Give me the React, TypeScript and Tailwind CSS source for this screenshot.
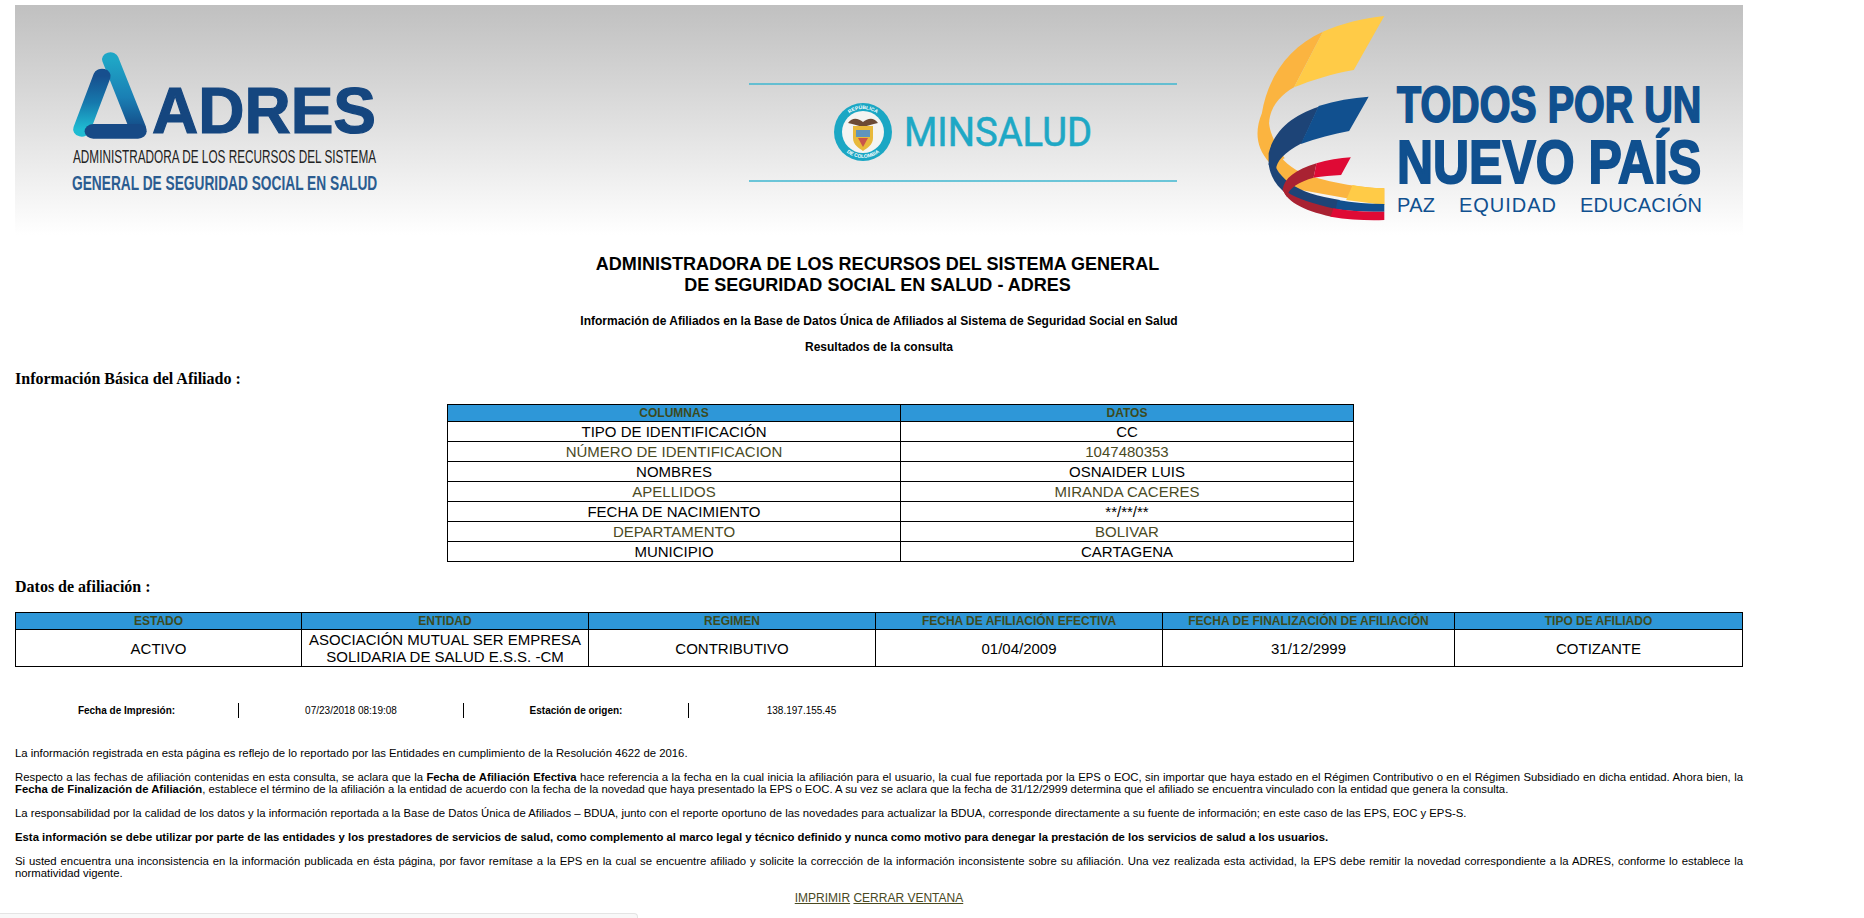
// App.tsx - consulta BDUA ADRES
const afiliado = [
  ["TIPO DE IDENTIFICACIÓN", "CC"],
  ["NÚMERO DE IDENTIFICACION", "1047480353"],
  ["NOMBRES", "OSNAIDER LUIS"],
  ["APELLIDOS", "MIRANDA CACERES"],
  ["FECHA DE NACIMIENTO", "**/**/**"],
  ["DEPARTAMENTO", "BOLIVAR"],
  ["MUNICIPIO", "CARTAGENA"],
];

const columnas = [
  { titulo: "ESTADO", valor: "ACTIVO", ancho: "w-[286px]" },
  { titulo: "ENTIDAD", valor: "ASOCIACIÓN MUTUAL SER EMPRESA SOLIDARIA DE SALUD E.S.S. -CM", ancho: "w-[287px]" },
  { titulo: "REGIMEN", valor: "CONTRIBUTIVO", ancho: "w-[287px]" },
  { titulo: "FECHA DE AFILIACIÓN EFECTIVA", valor: "01/04/2009", ancho: "w-[287px]" },
  { titulo: "FECHA DE FINALIZACIÓN DE AFILIACIÓN", valor: "31/12/2999", ancho: "w-[292px]" },
  { titulo: "TIPO DE AFILIADO", valor: "COTIZANTE", ancho: "w-[288px]" },
];

function LogoAdres() {
  return (
    <svg width="330" height="155" viewBox="0 0 330 155" className="mt-[40px] ml-[45px] shrink-0 overflow-visible">
      <defs>
        <linearGradient id="adresDer" x1="0" y1="0" x2="0" y2="1">
          <stop offset="0" stopColor="#1fa6c6" />
          <stop offset="0.55" stopColor="#1a7fb4" />
          <stop offset="1" stopColor="#144b87" />
        </linearGradient>
        <linearGradient id="adresIzq" x1="0" y1="0" x2="0" y2="1">
          <stop offset="0" stopColor="#174f8e" />
          <stop offset="0.5" stopColor="#1679ad" />
          <stop offset="1" stopColor="#1fbbd2" />
        </linearGradient>
      </defs>
      <g transform="translate(-60 -45) scale(0.3954 0.3333)">
        <path d="M279 178 L349 386" fill="none" stroke="url(#adresDer)" strokeWidth="42" strokeLinecap="round" />
        <path d="M258 228 L207 388" fill="none" stroke="url(#adresIzq)" strokeWidth="44" strokeLinecap="round" />
        <path d="M236 394 L349 394" fill="none" stroke="#174a86" strokeWidth="44" strokeLinecap="round" />
      </g>
      <g className="font-['Liberation_Sans',sans-serif]">
        <text x="92" y="88" fontSize="64" fontWeight="700" fill="#15467f" stroke="#15467f" strokeWidth="1.2" textLength="224" lengthAdjust="spacingAndGlyphs">ADRES</text>
        <text transform="translate(13 118) scale(0.72 1)" fontSize="18" fill="#222222" textLength="421" lengthAdjust="spacingAndGlyphs">ADMINISTRADORA DE LOS RECURSOS DEL SISTEMA</text>
        <text transform="translate(12 145) scale(0.72 1)" fontSize="21" fontWeight="700" fill="#2b5c90" textLength="424" lengthAdjust="spacingAndGlyphs">GENERAL DE SEGURIDAD SOCIAL EN SALUD</text>
      </g>
    </svg>
  );
}

function LogoMinsalud() {
  return (
    <svg width="428" height="100" viewBox="0 0 428 100" className="mt-[78px] ml-[359px] shrink-0">
      <path d="M0 1 H428 M0 98 H428" stroke="#3fb6d0" strokeWidth="1.6" />
      <g transform="translate(114 49)">
        <circle r="29" fill="#1ba7c4" />
        <circle r="21" fill="#f4f4f2" />
        <path d="M-15 -9 C-10 -16 -4 -13 0 -10 C4 -13 10 -16 15 -9 C9 -8 5 -6 0 -5 C-5 -6 -9 -8 -15 -9Z" fill="#6b4a35" />
        <path d="M-10 -6 H10 V6 C10 13 4 16 0 19 C-4 16 -10 13 -10 6Z" fill="#e8b93a" />
        <path d="M-7 -2 H7 V5 H-7Z" fill="#5f94bd" />
        <path d="M-5 6 H5 L0 15Z" fill="#c9544a" />
        <path id="aroSup" d="M-23 0 A23 23 0 0 1 23 0" fill="none" />
        <path id="aroInf" d="M-26 0 A26 26 0 0 0 26 0" fill="none" />
        <text fontSize="5" fontWeight="700" fill="#ffffff" textAnchor="middle" className="font-['Liberation_Sans',sans-serif]">
          <textPath href="#aroSup" startOffset="50%">REPÚBLICA</textPath>
        </text>
        <text fontSize="5" fontWeight="700" fill="#ffffff" textAnchor="middle" className="font-['Liberation_Sans',sans-serif]">
          <textPath href="#aroInf" startOffset="50%">DE COLOMBIA</textPath>
        </text>
      </g>
      <text x="155" y="63" fontSize="41" fontWeight="400" fill="#1ea8c5" textLength="188" lengthAdjust="spacingAndGlyphs" stroke="#1ea8c5" strokeWidth="0.6" className="font-['Roboto',sans-serif]">MINSALUD</text>
    </svg>
  );
}

function LogoPais() {
  return (
    <svg width="460" height="215" viewBox="0 0 460 215" className="mt-[5px] ml-[73px] shrink-0 overflow-visible">
      <g transform="translate(-50 -10) scale(0.4237 0.3333)">
        {/* cinta amarilla */}
        <path d="M290 95 C210 140 160 230 146 340 C130 390 130 440 165 490 L200 475 C180 440 165 400 163 370 C165 320 190 285 222 262Z" fill="#fbb440" />
        <path d="M435 48 L363 210 C310 222 265 240 222 262 L290 95 C335 70 385 55 435 48Z" fill="#ffcb47" />
        <path d="M185 460 C200 490 225 515 265 530 C320 550 375 562 435 565 L435 615 L215 565 L175 500Z" fill="#fbb440" />
        <path d="M360 555 C385 562 410 564 435 565 L435 615 L345 600Z" fill="#ffcb47" />
        {/* cinta azul */}
        <path d="M162 490 C165 540 195 590 250 610 C275 620 300 625 325 630 L330 600 C305 595 280 588 260 580 C225 565 195 540 180 505Z" fill="#1d4477" />
        <path d="M325 600 C360 608 400 612 435 612 L435 635 C395 637 355 634 320 628Z" fill="#11508f" />
        <path d="M280 320 C220 345 175 390 162 460 L162 495 L180 510 C178 490 195 460 240 430Z" fill="#1d4477" />
        <path d="M398 290 L352 393 C315 402 275 415 238 432 L280 318 C320 302 360 293 398 290Z" fill="#11508f" />
        {/* cinta roja */}
        <path d="M195 565 C200 600 240 632 310 650 L318 626 C270 612 225 595 205 575Z" fill="#a92232" />
        <path d="M315 625 C350 633 390 637 435 635 L435 660 C400 662 355 660 308 650Z" fill="#df0a35" />
        <path d="M275 490 C225 510 198 535 195 570 L205 590 C208 565 235 545 268 533Z" fill="#a92232" />
        <path d="M356 472 L333 525 C310 527 290 529 268 533 L275 490 C300 480 330 474 356 472Z" fill="#df0a35" />
      </g>
      <g fill="#10508f" className="font-['Liberation_Sans',sans-serif]">
        <text transform="translate(147 112) scale(0.82 1)" fontSize="50" fontWeight="700" stroke="#10508f" strokeWidth="1.8" textLength="371" lengthAdjust="spacingAndGlyphs">TODOS POR UN</text>
        <text transform="translate(147 173) scale(0.82 1)" fontSize="62" fontWeight="700" stroke="#10508f" strokeWidth="2" textLength="371" lengthAdjust="spacingAndGlyphs">NUEVO PAÍS</text>
        <text x="147" y="202" fontSize="20" textLength="38" lengthAdjust="spacing">PAZ</text>
        <text x="209" y="202" fontSize="20" textLength="97" lengthAdjust="spacing">EQUIDAD</text>
        <text x="330" y="202" fontSize="20" textLength="122" lengthAdjust="spacing">EDUCACIÓN</text>
      </g>
    </svg>
  );
}

export default function App() {
  return (
    <div className="relative h-[918px] overflow-hidden bg-white pt-[5px] pl-[15px] font-['Liberation_Sans',sans-serif] text-black">
      <div className="w-[1728px]">
        <header className="flex h-[230px] items-start bg-gradient-to-b from-[#c0c0c0] to-[#ffffff]">
          <LogoAdres />
          <LogoMinsalud />
          <LogoPais />
        </header>

        <div className="mt-[19px] text-center">
          <h1 className="pr-[3px] text-[18.05px] leading-[21px] font-bold">
            ADMINISTRADORA DE LOS RECURSOS DEL SISTEMA GENERAL
            <br />
            DE SEGURIDAD SOCIAL EN SALUD - ADRES
          </h1>
          <p className="mt-[18px] text-[12px] leading-[14px] font-bold">
            Información de Afiliados en la Base de Datos Única de Afiliados al Sistema de Seguridad Social en Salud
          </p>
          <p className="mt-[12px] text-[12px] leading-[14px] font-bold">Resultados de la consulta</p>
        </div>

        <h2 className="mt-[15px] font-['Liberation_Serif',serif] text-[16px] leading-[20px] font-bold">
          Información Básica del Afiliado :
        </h2>

        <table className="mt-[15px] ml-[432px] w-[907px] table-fixed border-collapse text-center text-[15px]">
          <thead>
            <tr className="h-[17px] bg-[#2e97d8] text-[12px] leading-[14px] font-bold text-[#3c4a1c]">
              <th className="w-[453px] border border-black p-0">COLUMNAS</th>
              <th className="border border-black p-0">DATOS</th>
            </tr>
          </thead>
          <tbody>
            {afiliado.map(([campo, dato], i) => (
              <tr key={campo} className={i % 2 === 1 ? "h-[20px] leading-[17px] text-[#4a4a1f]" : "h-[20px] leading-[17px]"}>
                <td className="border border-black p-0">{campo}</td>
                <td className="border border-black p-0">{dato}</td>
              </tr>
            ))}
          </tbody>
        </table>

        <h2 className="mt-[15px] font-['Liberation_Serif',serif] text-[16px] leading-[20px] font-bold">
          Datos de afiliación :
        </h2>

        <table className="mt-[15px] w-[1727px] table-fixed border-collapse text-center text-[15px]">
          <thead>
            <tr className="h-[17px] bg-[#2e97d8] text-[12px] leading-[14px] font-bold text-[#3c4a1c]">
              {columnas.map((c) => (
                <th key={c.titulo} className={`${c.ancho} border border-black p-0`}>
                  {c.titulo}
                </th>
              ))}
            </tr>
          </thead>
          <tbody>
            <tr className="h-[37px] leading-[17px]">
              {columnas.map((c) => (
                <td key={c.titulo} className="border border-black px-[5px] py-0">
                  {c.valor}
                </td>
              ))}
            </tr>
          </tbody>
        </table>

        <div className="mt-[36px] flex h-[15px] items-stretch text-center text-[10px] leading-[15px]">
          <div className="w-[224px] border-r border-black font-bold">Fecha de Impresión:</div>
          <div className="w-[225px] border-r border-black">07/23/2018 08:19:08</div>
          <div className="w-[225px] border-r border-black font-bold">Estación de origen:</div>
          <div className="w-[225px]">138.197.155.45</div>
        </div>

        <div className="mt-[29px] flex flex-col gap-[12px] text-justify text-[11.33px] leading-[12px]">
          <p>La información registrada en esta página es reflejo de lo reportado por las Entidades en cumplimiento de la Resolución 4622 de 2016.</p>
          <p>
            Respecto a las fechas de afiliación contenidas en esta consulta, se aclara que la <b>Fecha de Afiliación Efectiva</b> hace referencia a la fecha en la cual inicia la afiliación para el usuario, la cual fue reportada por la EPS o EOC, sin importar que haya estado en el Régimen Contributivo o en el Régimen Subsidiado en dicha entidad. Ahora bien, la <b>Fecha de Finalización de Afiliación</b>, establece el término de la afiliación a la entidad de acuerdo con la fecha de la novedad que haya presentado la EPS o EOC. A su vez se aclara que la fecha de 31/12/2999 determina que el afiliado se encuentra vinculado con la entidad que genera la consulta.
          </p>
          <p>La responsabilidad por la calidad de los datos y la información reportada a la Base de Datos Única de Afiliados – BDUA, junto con el reporte oportuno de las novedades para actualizar la BDUA, corresponde directamente a su fuente de información; en este caso de las EPS, EOC y EPS-S.</p>
          <p>
            <b>Esta información se debe utilizar por parte de las entidades y los prestadores de servicios de salud, como complemento al marco legal y técnico definido y nunca como motivo para denegar la prestación de los servicios de salud a los usuarios.</b>
          </p>
          <p>Si usted encuentra una inconsistencia en la información publicada en ésta página, por favor remítase a la EPS en la cual se encuentre afiliado y solicite la corrección de la información inconsistente sobre su afiliación. Una vez realizada esta actividad, la EPS debe remitir la novedad correspondiente a la ADRES, conforme lo establece la normatividad vigente.</p>
        </div>

        <div className="mt-[12px] text-center text-[12px] leading-[14px] text-[#4a4a1f]">
          <a href="#" className="underline">IMPRIMIR</a> <a href="#" className="underline">CERRAR VENTANA</a>
        </div>
      </div>

      <div className="absolute top-[913px] left-0 h-[10px] w-[638px] rounded-tr-[4px] border-t border-r border-[#e4e4e4] bg-[#f8f8f8]" />
    </div>
  );
}
